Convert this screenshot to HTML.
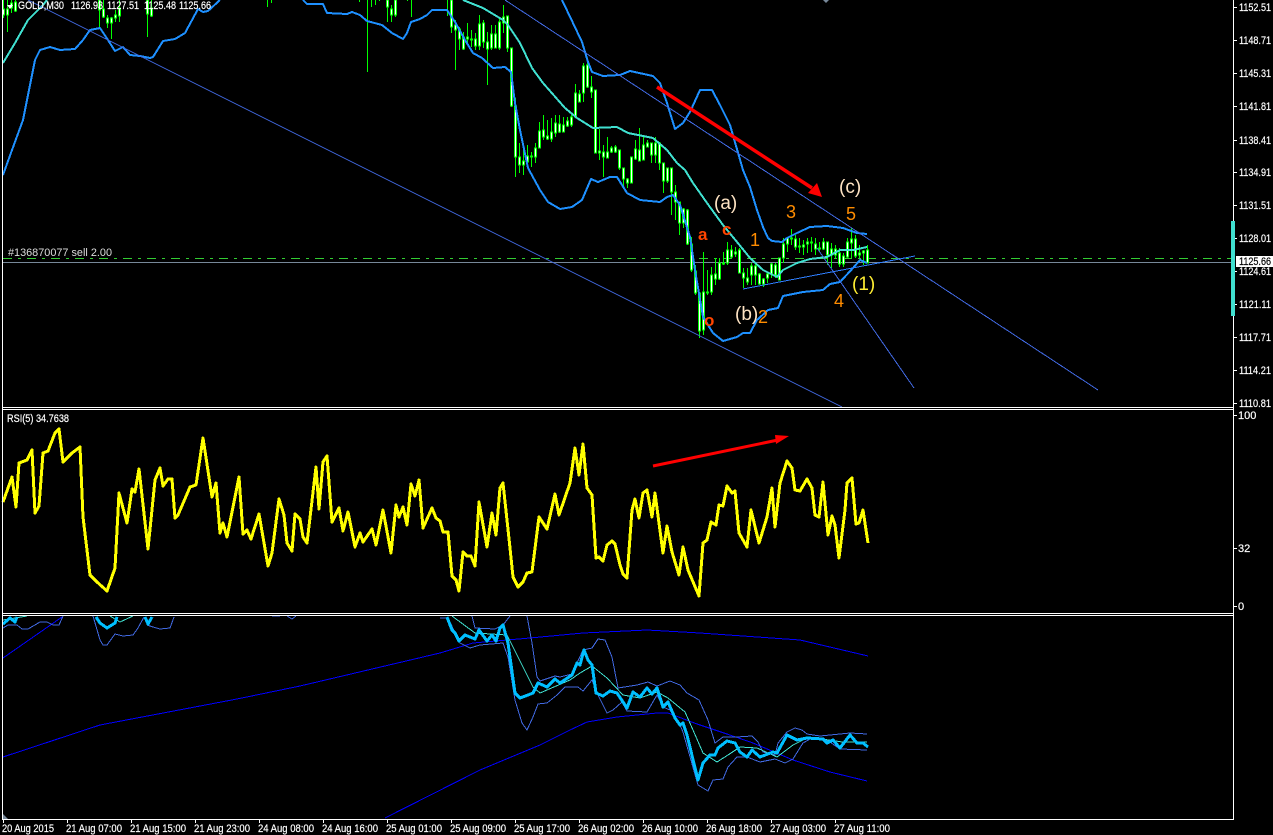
<!DOCTYPE html>
<html><head><meta charset="utf-8"><title>GOLD,M30</title>
<style>
html,body{margin:0;padding:0;background:#000;width:1273px;height:835px;overflow:hidden}
svg{display:block}
text{font-family:"Liberation Sans",Arial,sans-serif}
.t{font-size:11px;fill:#fff;stroke:#fff;stroke-width:.2}
.l{fill:none;shape-rendering:crispEdges;stroke-linejoin:round}
.n{font-size:18px;fill:#ff8c00}
.w{font-size:19px;fill:#ffe4c4}
.r{font-size:17px;font-weight:bold;fill:#ff4500}
</style></head><body>
<svg width="1273" height="835" viewBox="0 0 1273 835" xmlns="http://www.w3.org/2000/svg">
<rect width="1273" height="835" fill="#000"/>

<!-- gray price line and order line -->
<path class="l" d="M3 262.5H1231" stroke="#778899"/>
<path class="l" d="M3 258.5H1231" stroke="#32cd32" stroke-dasharray="9 6 3 6"/>

<!-- candle wicks -->
<path class="l" stroke="#00ff00" d="M3.5 0V18M7.5 0V32M11.5 0V13M15.5 0V12M99.5 0V28M103.5 0V18M107.5 15V28M111.5 17V39M115.5 10V22M119.5 0V22M147.5 0V37M151.5 0V17M267.5 0V7M271.5 0V3M359.5 0V2M367.5 0V72M371.5 0V7M375.5 0V5M379.5 0V1M387.5 0V22M391.5 5V22M395.5 0V17M407.5 0V1M411.5 0V17M447.5 0V16M451.5 0V33M455.5 20V70M459.5 27V50M463.5 32V50M467.5 23V43M471.5 30V47M475.5 33V50M479.5 15V50M483.5 20V48M487.5 32V85M491.5 25V50M495.5 25V45M499.5 17V50M503.5 5V33M507.5 17V52M511.5 48V107M515.5 98V177M519.5 143V173M523.5 150V175M527.5 145V167M531.5 152V167M535.5 143V163M539.5 122V148M543.5 115V140M547.5 120V140M551.5 118V142M555.5 115V137M559.5 115V133M563.5 117V132M567.5 117V127M571.5 115V127M575.5 84V117M579.5 90V102M583.5 63V102M587.5 63V88M591.5 76V98M595.5 90V152M599.5 129V160M603.5 145V177M607.5 137V158M611.5 146V153M615.5 145V153M619.5 150V170M623.5 168V187M627.5 178V188M631.5 157V183M635.5 140V160M639.5 128V161M643.5 136V160M647.5 140V147M651.5 143V163M655.5 137V163M659.5 142V170M663.5 163V193M667.5 168V183M671.5 168V215M675.5 185V220M679.5 202V235M683.5 208V228M687.5 209V245M691.5 237V272M695.5 265V295M699.5 292V338M703.5 252V335M707.5 270V295M711.5 267V295M715.5 258V285M719.5 258V280M723.5 252V265M727.5 242V265M731.5 245V258M735.5 247V257M739.5 248V273M743.5 268V288M747.5 268V285M751.5 263V285M755.5 263V285M759.5 273V285M763.5 278V287M767.5 273V283M771.5 263V278M775.5 263V278M779.5 258V280M783.5 238V263M787.5 237V252M791.5 229V245M795.5 235V250M799.5 238V253M803.5 240V255M807.5 238V253M811.5 237V252M815.5 238V255M819.5 242V252M823.5 238V250M827.5 242V265M831.5 243V268M835.5 245V258M839.5 248V267M843.5 253V267M847.5 238V258M851.5 228V258M855.5 235V258M859.5 245V258M863.5 250V265M867.5 245V263"/>
<!-- candle bodies -->
<path class="l" stroke="#00ff00" fill="#fff" style="fill:#fff" d="M2.5 9h2V15h-2zM6.5 9h2V15h-2zM10.5 3h2V8h-2zM14.5 2h2V11h-2zM98.5 0h2V10h-2zM102.5 9h2V17h-2zM106.5 18h2V23h-2zM110.5 18h2V23h-2zM114.5 15h2V18h-2zM118.5 8h2V16h-2zM146.5 0h2V14h-2zM150.5 8h2V16h-2zM386.5 0h2V7h-2zM390.5 9h2V15h-2zM394.5 0h2V15h-2zM450.5 0h2V27h-2zM454.5 25h2V30h-2zM458.5 29h2V39h-2zM462.5 37h2V49h-2zM466.5 37h2V39h-2zM470.5 39h2V40h-2zM474.5 39h2V46h-2zM478.5 24h2V46h-2zM482.5 23h2V42h-2zM486.5 42h2V49h-2zM490.5 34h2V48h-2zM494.5 34h2V48h-2zM498.5 22h2V48h-2zM502.5 17h2V23h-2zM506.5 16h2V48h-2zM510.5 48h2V106h-2zM514.5 106h2V157h-2zM518.5 157h2V165h-2zM522.5 161h2V165h-2zM526.5 156h2V162h-2zM530.5 156h2V157h-2zM534.5 148h2V157h-2zM538.5 131h2V148h-2zM542.5 130h2V137h-2zM546.5 136h2V139h-2zM550.5 132h2V139h-2zM554.5 123h2V133h-2zM558.5 124h2V132h-2zM562.5 125h2V132h-2zM566.5 121h2V126h-2zM570.5 117h2V125h-2zM574.5 93h2V117h-2zM578.5 94h2V102h-2zM582.5 66h2V93h-2zM586.5 65h2V87h-2zM590.5 87h2V92h-2zM594.5 90h2V153h-2zM598.5 151h2V153h-2zM602.5 152h2V157h-2zM606.5 152h2V158h-2zM610.5 148h2V152h-2zM614.5 147h2V152h-2zM618.5 150h2V168h-2zM622.5 168h2V179h-2zM626.5 179h2V183h-2zM630.5 157h2V183h-2zM634.5 149h2V159h-2zM638.5 150h2V161h-2zM642.5 145h2V160h-2zM646.5 143h2V147h-2zM650.5 143h2V155h-2zM654.5 143h2V155h-2zM658.5 143h2V163h-2zM662.5 163h2V181h-2zM666.5 168h2V181h-2zM670.5 168h2V192h-2zM674.5 192h2V202h-2zM678.5 202h2V223h-2zM682.5 209h2V223h-2zM686.5 210h2V244h-2zM690.5 244h2V270h-2zM694.5 271h2V293h-2zM698.5 293h2V331h-2zM702.5 292h2V330h-2zM706.5 292h2V293h-2zM710.5 275h2V292h-2zM714.5 274h2V279h-2zM718.5 263h2V279h-2zM722.5 263h2V264h-2zM726.5 250h2V263h-2zM730.5 250h2V257h-2zM734.5 252h2V254h-2zM738.5 250h2V273h-2zM742.5 273h2V278h-2zM746.5 278h2V282h-2zM750.5 266h2V275h-2zM754.5 266h2V275h-2zM758.5 274h2V284h-2zM762.5 279h2V284h-2zM766.5 274h2V278h-2zM770.5 264h2V274h-2zM774.5 265h2V275h-2zM778.5 258h2V280h-2zM782.5 244h2V258h-2zM786.5 238h2V244h-2zM790.5 238h2V239h-2zM794.5 239h2V247h-2zM798.5 246h2V247h-2zM802.5 245h2V247h-2zM806.5 242h2V244h-2zM810.5 242h2V243h-2zM814.5 244h2V249h-2zM818.5 248h2V249h-2zM822.5 242h2V249h-2zM826.5 242h2V255h-2zM830.5 249h2V255h-2zM834.5 249h2V255h-2zM838.5 253h2V264h-2zM842.5 256h2V264h-2zM846.5 242h2V257h-2zM850.5 239h2V243h-2zM854.5 239h2V256h-2zM858.5 253h2V255h-2zM862.5 251h2V253h-2zM866.5 250h2V263h-2z"/>

<!-- Bollinger main -->
<g class="l" stroke="#1e90ff" stroke-width="2" fill="none" style="fill:none">
<polyline fill="none" points="3,175 12,150 23,120 30,85 35,60 40,50 50,47 60,50 75,49 83,40 90,30 100,28 108,40 115,51 123,47 130,55 140,56 150,58 153,57 163,41 175,39 185,33 198,9 203,12 208,11 220,0"/>
<polyline fill="none" points="303,0 307,4 323,4 327,13 347,14 352,12 360,15 367,21 382,25 392,33 403,39 407,33 411,22 420,19 427,15 432,10 447,10 455,22 465,40 473,53 482,58 493,68 505,67 511,72 515,103 520,130 528,168 540,190 548,202 560,209 572,207 582,200 591,179 598,182 610,177 617,177 627,193 640,200 660,202 667,197 673,195 680,205 690,237 695,270 703,317 713,333 723,341 737,337 743,333 750,333 757,320 768,310 778,308 783,296 803,292 823,290 830,284 840,282 853,268 860,260 867,263"/>
<polyline fill="none" points="562,0 573,23 582,42 588,62 592,72 603,76 620,75 630,71 653,76 660,83 667,103 675,129 683,123 690,112 700,90 712,90 720,105 730,125 743,170 750,187 757,210 763,227 768,238 772,241 782,242 787,238 797,233 810,227 827,226 843,228 857,233 867,234"/>
</g>
<polyline class="l" fill="none" stroke="#40e0d0" stroke-width="2" points="3,63 15,43 28,20 43,5 47,0"/>
<polyline class="l" fill="none" stroke="#40e0d0" stroke-width="2" points="463,0 473,4 483,8 503,20 508,25 520,43 532,68 543,83 565,108 577,118 593,128 617,127 628,133 653,138 667,150 677,163 685,170 693,183 707,203 723,225 737,242 750,258 763,270 777,277 783,270 797,263 810,259 827,257 840,250 853,250 867,247"/>

<!-- trend lines -->
<path class="l" stroke="#4169e1" fill="none" d="M28 0L842 407M505 0L1098 390M817 248L914 388"/>
<path class="l" stroke="#2f7fff" fill="none" d="M743 289L915 256"/>

<!-- red arrow main -->
<path stroke="#ff0000" stroke-width="3.5" fill="none" d="M657 87L812 188"/>
<polygon fill="#ff0000" points="822,197 808,193 817,183"/>

<!-- annotations -->
<text class="w" x="714" y="209">(a)</text>
<text class="w" x="839" y="193">(c)</text>
<text class="w" x="735" y="320">(b)</text>
<text class="w" x="852" y="290" style="fill:#ffee33">(1)</text>
<text class="r" x="698" y="240">a</text>
<text class="r" x="722" y="235">c</text>
<text class="r" x="704" y="326">o</text>
<text class="n" x="750" y="246">1</text>
<text class="n" x="786" y="218">3</text>
<text class="n" x="846" y="220">5</text>
<text class="n" x="758" y="323">2</text>
<text class="n" x="834" y="307">4</text>

<!-- header -->
<polygon fill="#fff" points="7,5 13,5 10,9"/>
<text class="t" x="18" y="9" textLength="46" lengthAdjust="spacingAndGlyphs">GOLD,M30</text>
<text class="t" x="71" y="9" textLength="32" lengthAdjust="spacingAndGlyphs">1126.93</text>
<text class="t" x="107" y="9" textLength="32" lengthAdjust="spacingAndGlyphs">1127.51</text>
<text class="t" x="144" y="9" textLength="32" lengthAdjust="spacingAndGlyphs">1125.48</text>
<text class="t" x="179" y="9" textLength="32" lengthAdjust="spacingAndGlyphs">1125.66</text>
<text class="t" x="8" y="256" textLength="104" lengthAdjust="spacingAndGlyphs" style="fill:#ddd;stroke:none">#136870077 sell 2.00</text>
<polygon fill="#778899" points="823,0 829,0 826,3"/>

<!-- panel clear + separators -->
<rect x="3" y="408" width="1230" height="207" fill="#000"/>

<!-- RSI -->
<text class="t" x="7" y="422" textLength="62" lengthAdjust="spacingAndGlyphs">RSI(5) 34.7638</text>
<polyline class="l" fill="none" stroke="#ffff00" stroke-width="3" points="3,502 12,477 16,507 19,463 27,460 32,450 35,513 39,506 43,453 48,451 55,433 59,429 63,462 72,453 80,447 83,517 90,575 97,582 107,591 115,568 119,493 127,523 132,489 135,492 139,469 148,549 155,480 160,468 163,486 168,479 172,479 175,518 178,515 190,487 196,485 203,438 212,497 216,483 220,533 223,523 227,537 239,477 243,534 247,530 251,539 259,514 268,566 272,553 279,499 284,515 287,543 292,551 295,514 300,519 303,537 307,543 316,467 319,509 323,462 327,456 332,522 339,508 343,531 348,512 355,547 360,533 363,542 372,529 376,545 383,510 391,553 396,505 399,517 403,507 407,525 411,484 415,496 419,480 423,528 432,508 436,518 440,521 443,532 448,532 452,576 456,580 459,591 463,552 467,556 471,556 475,566 479,502 487,547 492,513 496,535 500,488 503,483 510,548 513,577 518,587 523,582 527,573 532,572 539,517 547,529 555,494 559,515 570,483 575,448 579,475 583,444 587,488 592,495 596,558 599,557 603,561 607,545 612,541 615,544 620,565 623,574 627,578 632,510 635,499 639,518 643,493 647,490 652,517 655,493 663,553 667,526 672,552 679,575 683,547 688,570 699,596 703,543 707,540 711,522 716,525 719,505 723,506 727,486 732,493 735,491 739,533 747,547 751,510 759,543 767,517 772,488 775,527 780,483 787,461 792,468 795,490 800,491 807,479 812,488 815,515 819,517 823,482 828,535 832,516 835,525 839,558 845,510 847,483 852,478 856,524 859,523 863,510 868,543"/>
<path stroke="#ff0000" stroke-width="3" fill="none" d="M653 466L778 440"/>
<polygon fill="#ff0000" points="789,436 775,435 776,444"/>

<!-- third panel: MAs -->
<g class="l" fill="none" style="fill:none">
<polyline fill="none" stroke="#0000ff" points="3,658 62,617"/>
<polyline fill="none" stroke="#0000ff" points="3,757 100,725 237,699 300,686 440,653 473,643 530,638 583,633 647,630 700,633 800,640 868,656"/>
<polyline fill="none" stroke="#0000ff" points="385,818 480,770 540,745 570,730 587,722 617,717 657,713 668,713 697,724 727,734 753,743 793,760 830,772 867,781"/>
<!-- bands -->
<polyline fill="none" stroke="#4169e1" points="3,628 8,625 17,625 22,629 28,629 40,622 47,622 53,625 59,625 63,616"/>
<polyline fill="none" stroke="#4169e1" points="93,616 100,640 103,645 107,645 115,634 123,636 133,635 138,628 144,617"/>
<polyline fill="none" stroke="#4169e1" points="147,625 153,627 160,629 170,628 174,617"/>
<polyline fill="none" stroke="#4169e1" points="272,616 280,616"/>
<polyline fill="none" stroke="#4169e1" points="287,616 292,619 296,616"/>
<polyline fill="none" stroke="#4169e1" points="472,616 475,628 495,629 503,625 510,616"/>
<polyline fill="none" stroke="#4169e1" points="527,616 532,643 537,677 540,681 555,676 560,677 572,674 583,650 592,648 598,639 605,640 612,657 618,688 637,685 648,682 657,686 670,681 680,685 687,693 699,700 708,720 715,743 723,737 737,737 752,736 758,742 763,752 775,755 778,743 787,732 795,728 802,730 807,734 820,736 850,733 867,734"/>
<polyline fill="none" stroke="#4169e1" points="440,618 448,618 460,643 470,648 480,645 503,643 508,657 515,700 522,723 527,730 533,717 538,704 547,703 557,695 565,687 578,687 583,691 592,680 597,693 607,713 613,710 622,702 627,711 647,712 657,695 663,707 670,710 680,725 683,732 698,785 708,791 713,780 723,779 728,767 737,757 747,757 760,762 775,759 785,763 793,759 803,743 810,739 827,740 840,749 867,750"/>
<!-- mid -->
<polyline fill="none" stroke="#40e0d0" points="3,620 27,616"/>
<polyline fill="none" stroke="#40e0d0" points="110,616 120,622 133,616"/>
<polyline fill="none" stroke="#40e0d0" points="452,616 475,633 507,635 518,657 533,687 540,693 570,680 580,673 592,666 607,678 623,695 640,698 657,692 668,698 685,712 693,730 703,753 717,762 728,755 740,747 757,748 777,757 793,745 807,738 830,740 842,742 867,742"/>
</g>
<!-- thick line -->
<g fill="none" stroke="#00bfff" stroke-width="3" class="l" style="fill:none">
<polyline fill="none" points="3,624 10,618 15,622 17,617"/>
<polyline fill="none" points="96,617 100,623 107,628 115,623 117,617"/>
<polyline fill="none" points="145,617 148,624 152,617"/>
<polyline fill="none" points="447,617 452,630 455,633 459,641 465,635 475,639 479,630 487,641 492,635 496,641 500,628 503,625 508,643 515,693 520,698 528,695 533,693 538,683 547,687 555,679 560,683 572,675 577,663 580,665 584,650 588,660 592,665 596,693 603,696 610,691 617,693 627,708 633,692 640,697 647,688 652,694 657,688 663,707 668,702 675,718 680,725 683,723 687,735 698,780 703,763 710,755 715,755 718,748 727,741 735,743 740,752 747,757 752,750 760,757 773,752 777,753 787,735 797,740 807,738 823,739 827,743 833,740 840,748 850,735 857,743 863,743 868,747"/>
</g>

<!-- frame -->
<rect x="0" y="820" width="1233" height="15" fill="#000"/>
<path class="l" stroke="#fff" fill="none" d="M2.5 0V819M2 407.5H1233M2 409.5H1233M2 613.5H1233M2 615.5H1233M2 819.5H1234M1233.5 0V820"/>
<path class="l" stroke="#fff" fill="none" d="M3.5 820V823M67.5 820V823M131.5 820V823M195.5 820V823M259.5 820V823M323.5 820V823M387.5 820V823M451.5 820V823M515.5 820V823M579.5 820V823M643.5 820V823M707.5 820V823M771.5 820V823M835.5 820V823"/>
<path class="l" stroke="#fff" fill="none" d="M1234 7.5h3M1234 40.5h3M1234 73.5h3M1234 106.5h3M1234 140.5h3M1234 172.5h3M1234 205.5h3M1234 238.5h3M1234 271.5h3M1234 304.5h3M1234 337.5h3M1234 370.5h3M1234 403.5h3M1234 415.5h3M1234 548.5h3M1234 606.5h3"/>
<polygon fill="#778899" points="3,814 3,819 8,819"/>

<!-- cyan bar -->
<rect x="1231" y="221" width="4" height="95" fill="#40e0d0"/>

<!-- price labels -->
<g class="t">
<text class="t" x="1239" y="11" textLength="32" lengthAdjust="spacingAndGlyphs">1152.51</text>
<text class="t" x="1239" y="44" textLength="32" lengthAdjust="spacingAndGlyphs">1148.71</text>
<text class="t" x="1239" y="77" textLength="32" lengthAdjust="spacingAndGlyphs">1145.31</text>
<text class="t" x="1239" y="110" textLength="32" lengthAdjust="spacingAndGlyphs">1141.81</text>
<text class="t" x="1239" y="144" textLength="32" lengthAdjust="spacingAndGlyphs">1138.41</text>
<text class="t" x="1239" y="176" textLength="32" lengthAdjust="spacingAndGlyphs">1134.91</text>
<text class="t" x="1239" y="209" textLength="32" lengthAdjust="spacingAndGlyphs">1131.51</text>
<text class="t" x="1239" y="242" textLength="32" lengthAdjust="spacingAndGlyphs">1128.01</text>
<text class="t" x="1239" y="275" textLength="32" lengthAdjust="spacingAndGlyphs">1124.61</text>
<text class="t" x="1239" y="308" textLength="32" lengthAdjust="spacingAndGlyphs">1121.11</text>
<text class="t" x="1239" y="341" textLength="32" lengthAdjust="spacingAndGlyphs">1117.71</text>
<text class="t" x="1239" y="374" textLength="32" lengthAdjust="spacingAndGlyphs">1114.21</text>
<text class="t" x="1239" y="407" textLength="32" lengthAdjust="spacingAndGlyphs">1110.81</text>
</g>
<rect x="1236" y="256" width="37" height="11" fill="#fff"/>
<text class="t" x="1239" y="265" textLength="32" lengthAdjust="spacingAndGlyphs" style="fill:#000;stroke:#000">1125.66</text>
<text class="t" x="1238" y="419">100</text>
<text class="t" x="1238" y="552">32</text>
<text class="t" x="1238" y="610">0</text>

<!-- time labels -->
<text class="t" x="2" y="832" textLength="52" lengthAdjust="spacingAndGlyphs">20 Aug 2015</text>
<text class="t" x="66" y="832" textLength="56" lengthAdjust="spacingAndGlyphs">21 Aug 07:00</text>
<text class="t" x="130" y="832" textLength="56" lengthAdjust="spacingAndGlyphs">21 Aug 15:00</text>
<text class="t" x="194" y="832" textLength="56" lengthAdjust="spacingAndGlyphs">21 Aug 23:00</text>
<text class="t" x="258" y="832" textLength="56" lengthAdjust="spacingAndGlyphs">24 Aug 08:00</text>
<text class="t" x="322" y="832" textLength="56" lengthAdjust="spacingAndGlyphs">24 Aug 16:00</text>
<text class="t" x="386" y="832" textLength="56" lengthAdjust="spacingAndGlyphs">25 Aug 01:00</text>
<text class="t" x="450" y="832" textLength="56" lengthAdjust="spacingAndGlyphs">25 Aug 09:00</text>
<text class="t" x="514" y="832" textLength="56" lengthAdjust="spacingAndGlyphs">25 Aug 17:00</text>
<text class="t" x="578" y="832" textLength="56" lengthAdjust="spacingAndGlyphs">26 Aug 02:00</text>
<text class="t" x="642" y="832" textLength="56" lengthAdjust="spacingAndGlyphs">26 Aug 10:00</text>
<text class="t" x="706" y="832" textLength="56" lengthAdjust="spacingAndGlyphs">26 Aug 18:00</text>
<text class="t" x="770" y="832" textLength="56" lengthAdjust="spacingAndGlyphs">27 Aug 03:00</text>
<text class="t" x="834" y="832" textLength="56" lengthAdjust="spacingAndGlyphs">27 Aug 11:00</text>
</svg>
</body></html>
